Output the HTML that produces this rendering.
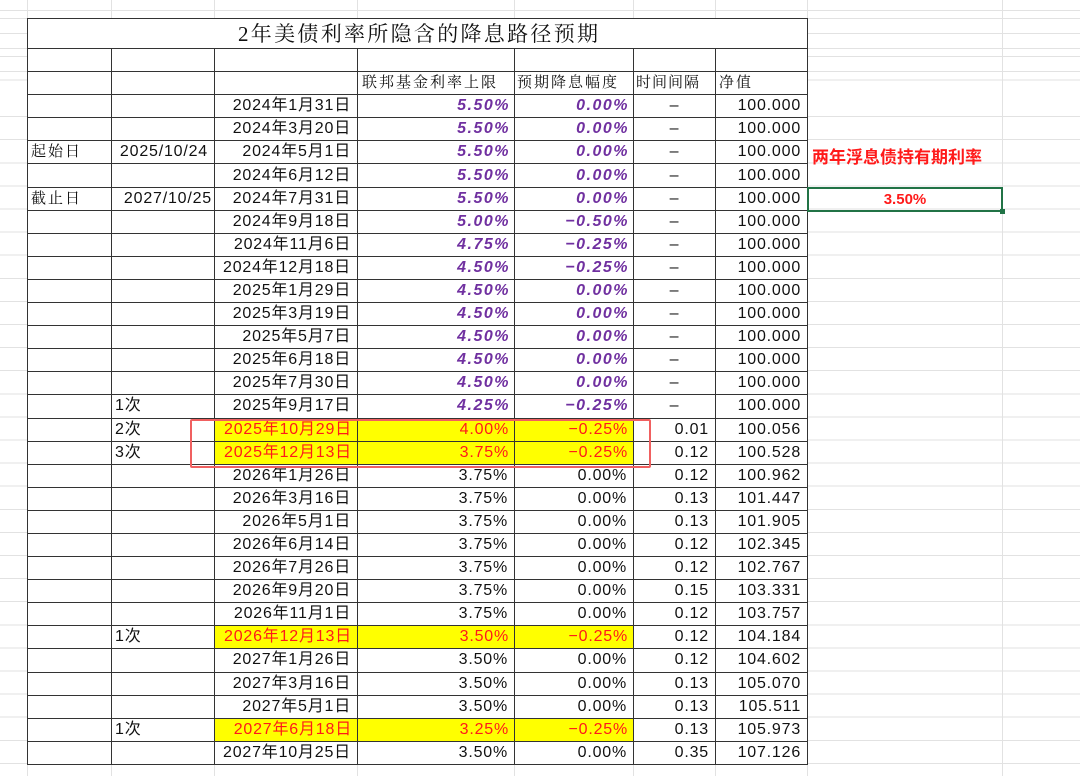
<!DOCTYPE html>
<html><head><meta charset="utf-8"><style>
body{margin:0;width:1080px;height:776px;overflow:hidden;background:#fff;position:relative;font-family:"Liberation Sans","Noto Sans CJK SC",sans-serif;}
.bg{position:absolute;left:0;top:0;width:1080px;height:776px;
background-image:
repeating-linear-gradient(to bottom,transparent 0,transparent 22.1px,#e2e2e2 22.1px,#e2e2e2 23.1px);
background-position:0 94px;}
.v{position:absolute;top:0;height:776px;width:1px;background:#e2e2e2}
.h{position:absolute;left:0;width:1080px;height:1px;background:#e2e2e2}
table{position:absolute;left:27px;top:18px;width:781px;border-collapse:collapse;table-layout:fixed;background:#fff}
td{border:1px solid #333;padding:0 3px;font-size:16px;height:22.1px;line-height:20px;white-space:nowrap;overflow:hidden;color:#111;letter-spacing:0.8px}
.t td{height:29px}
.s{font-family:"Liberation Serif","Noto Serif CJK SC",serif;letter-spacing:2px;font-size:15px}
.r{text-align:right;padding-right:6px}.c{text-align:center}
.p{color:#7030a0;font-style:italic;font-weight:bold;text-align:right;padding-right:4px;letter-spacing:1.5px}
.y{background:#ffff00;color:#ff1a1a;text-align:right;padding-right:5px}
.box{position:absolute;left:190px;top:419px;width:457px;height:45px;border:2px solid #f06060;border-radius:2px}
.lab{position:absolute;left:812px;top:143px;color:#ff1a1a;font-weight:bold;font-size:17px;font-family:"Liberation Sans","Noto Sans CJK SC",sans-serif}
.sel{position:absolute;left:807px;top:187px;width:192px;height:21px;border:2px solid #217346;color:#ff1a1a;font-weight:bold;font-size:15px;text-align:center;line-height:21px}
.sel i{position:absolute;right:-4px;bottom:-4px;width:5px;height:5px;background:#217346}
</style></head><body>
<div class="bg"></div>
<div class="h" style="top:18px"></div><div class="h" style="top:48px"></div><div class="h" style="top:71px"></div>
<div class="v" style="left:27px"></div><div class="v" style="left:111px"></div><div class="v" style="left:214px"></div><div class="v" style="left:357px"></div><div class="v" style="left:514px"></div><div class="v" style="left:633px"></div><div class="v" style="left:715px"></div><div class="v" style="left:807px"></div><div class="v" style="left:1002px"></div>
<table>
<colgroup><col style="width:84px"><col style="width:103px"><col style="width:143px"><col style="width:157px"><col style="width:119px"><col style="width:82px"><col style="width:92px"></colgroup>
<tr class="t"><td colspan="7" class="s" style="font-size:21px;padding-left:210px;letter-spacing:2.3px">2年美债利率所隐含的降息路径预期</td></tr>
<tr><td></td><td></td><td></td><td></td><td></td><td></td><td></td></tr>
<tr><td></td><td></td><td></td><td class="s" style="padding-left:4px">联邦基金利率上限</td><td class="s" style="padding-left:2px">预期降息幅度</td><td class="s" style="padding-left:2px;letter-spacing:1px">时间间隔</td><td class="s">净值</td></tr>
<tr><td></td><td></td><td class="r">2024年1月31日</td><td class="p">5.50%</td><td class="p">0.00%</td><td class="c">–</td><td class="r">100.000</td></tr>
<tr><td></td><td></td><td class="r">2024年3月20日</td><td class="p">5.50%</td><td class="p">0.00%</td><td class="c">–</td><td class="r">100.000</td></tr>
<tr><td class="s">起始日</td><td class="r">2025/10/24</td><td class="r">2024年5月1日</td><td class="p">5.50%</td><td class="p">0.00%</td><td class="c">–</td><td class="r">100.000</td></tr>
<tr><td></td><td></td><td class="r">2024年6月12日</td><td class="p">5.50%</td><td class="p">0.00%</td><td class="c">–</td><td class="r">100.000</td></tr>
<tr><td class="s">截止日</td><td class="r" style="padding-right:2px">2027/10/25</td><td class="r">2024年7月31日</td><td class="p">5.50%</td><td class="p">0.00%</td><td class="c">–</td><td class="r">100.000</td></tr>
<tr><td></td><td></td><td class="r">2024年9月18日</td><td class="p">5.00%</td><td class="p">−0.50%</td><td class="c">–</td><td class="r">100.000</td></tr>
<tr><td></td><td></td><td class="r">2024年11月6日</td><td class="p">4.75%</td><td class="p">−0.25%</td><td class="c">–</td><td class="r">100.000</td></tr>
<tr><td></td><td></td><td class="r">2024年12月18日</td><td class="p">4.50%</td><td class="p">−0.25%</td><td class="c">–</td><td class="r">100.000</td></tr>
<tr><td></td><td></td><td class="r">2025年1月29日</td><td class="p">4.50%</td><td class="p">0.00%</td><td class="c">–</td><td class="r">100.000</td></tr>
<tr><td></td><td></td><td class="r">2025年3月19日</td><td class="p">4.50%</td><td class="p">0.00%</td><td class="c">–</td><td class="r">100.000</td></tr>
<tr><td></td><td></td><td class="r">2025年5月7日</td><td class="p">4.50%</td><td class="p">0.00%</td><td class="c">–</td><td class="r">100.000</td></tr>
<tr><td></td><td></td><td class="r">2025年6月18日</td><td class="p">4.50%</td><td class="p">0.00%</td><td class="c">–</td><td class="r">100.000</td></tr>
<tr><td></td><td></td><td class="r">2025年7月30日</td><td class="p">4.50%</td><td class="p">0.00%</td><td class="c">–</td><td class="r">100.000</td></tr>
<tr><td></td><td>1次</td><td class="r">2025年9月17日</td><td class="p">4.25%</td><td class="p">−0.25%</td><td class="c">–</td><td class="r">100.000</td></tr>
<tr><td></td><td>2次</td><td class="y">2025年10月29日</td><td class="y">4.00%</td><td class="y">−0.25%</td><td class="r">0.01</td><td class="r">100.056</td></tr>
<tr><td></td><td>3次</td><td class="y">2025年12月13日</td><td class="y">3.75%</td><td class="y">−0.25%</td><td class="r">0.12</td><td class="r">100.528</td></tr>
<tr><td></td><td></td><td class="r">2026年1月26日</td><td class="r">3.75%</td><td class="r">0.00%</td><td class="r">0.12</td><td class="r">100.962</td></tr>
<tr><td></td><td></td><td class="r">2026年3月16日</td><td class="r">3.75%</td><td class="r">0.00%</td><td class="r">0.13</td><td class="r">101.447</td></tr>
<tr><td></td><td></td><td class="r">2026年5月1日</td><td class="r">3.75%</td><td class="r">0.00%</td><td class="r">0.13</td><td class="r">101.905</td></tr>
<tr><td></td><td></td><td class="r">2026年6月14日</td><td class="r">3.75%</td><td class="r">0.00%</td><td class="r">0.12</td><td class="r">102.345</td></tr>
<tr><td></td><td></td><td class="r">2026年7月26日</td><td class="r">3.75%</td><td class="r">0.00%</td><td class="r">0.12</td><td class="r">102.767</td></tr>
<tr><td></td><td></td><td class="r">2026年9月20日</td><td class="r">3.75%</td><td class="r">0.00%</td><td class="r">0.15</td><td class="r">103.331</td></tr>
<tr><td></td><td></td><td class="r">2026年11月1日</td><td class="r">3.75%</td><td class="r">0.00%</td><td class="r">0.12</td><td class="r">103.757</td></tr>
<tr><td></td><td>1次</td><td class="y">2026年12月13日</td><td class="y">3.50%</td><td class="y">−0.25%</td><td class="r">0.12</td><td class="r">104.184</td></tr>
<tr><td></td><td></td><td class="r">2027年1月26日</td><td class="r">3.50%</td><td class="r">0.00%</td><td class="r">0.12</td><td class="r">104.602</td></tr>
<tr><td></td><td></td><td class="r">2027年3月16日</td><td class="r">3.50%</td><td class="r">0.00%</td><td class="r">0.13</td><td class="r">105.070</td></tr>
<tr><td></td><td></td><td class="r">2027年5月1日</td><td class="r">3.50%</td><td class="r">0.00%</td><td class="r">0.13</td><td class="r">105.511</td></tr>
<tr><td></td><td>1次</td><td class="y">2027年6月18日</td><td class="y">3.25%</td><td class="y">−0.25%</td><td class="r">0.13</td><td class="r">105.973</td></tr>
<tr><td></td><td></td><td class="r">2027年10月25日</td><td class="r">3.50%</td><td class="r">0.00%</td><td class="r">0.35</td><td class="r">107.126</td></tr>
</table>
<div class="box"></div>
<div class="lab">两年浮息债持有期利率</div>
<div class="sel">3.50%<i></i></div>
</body></html>
